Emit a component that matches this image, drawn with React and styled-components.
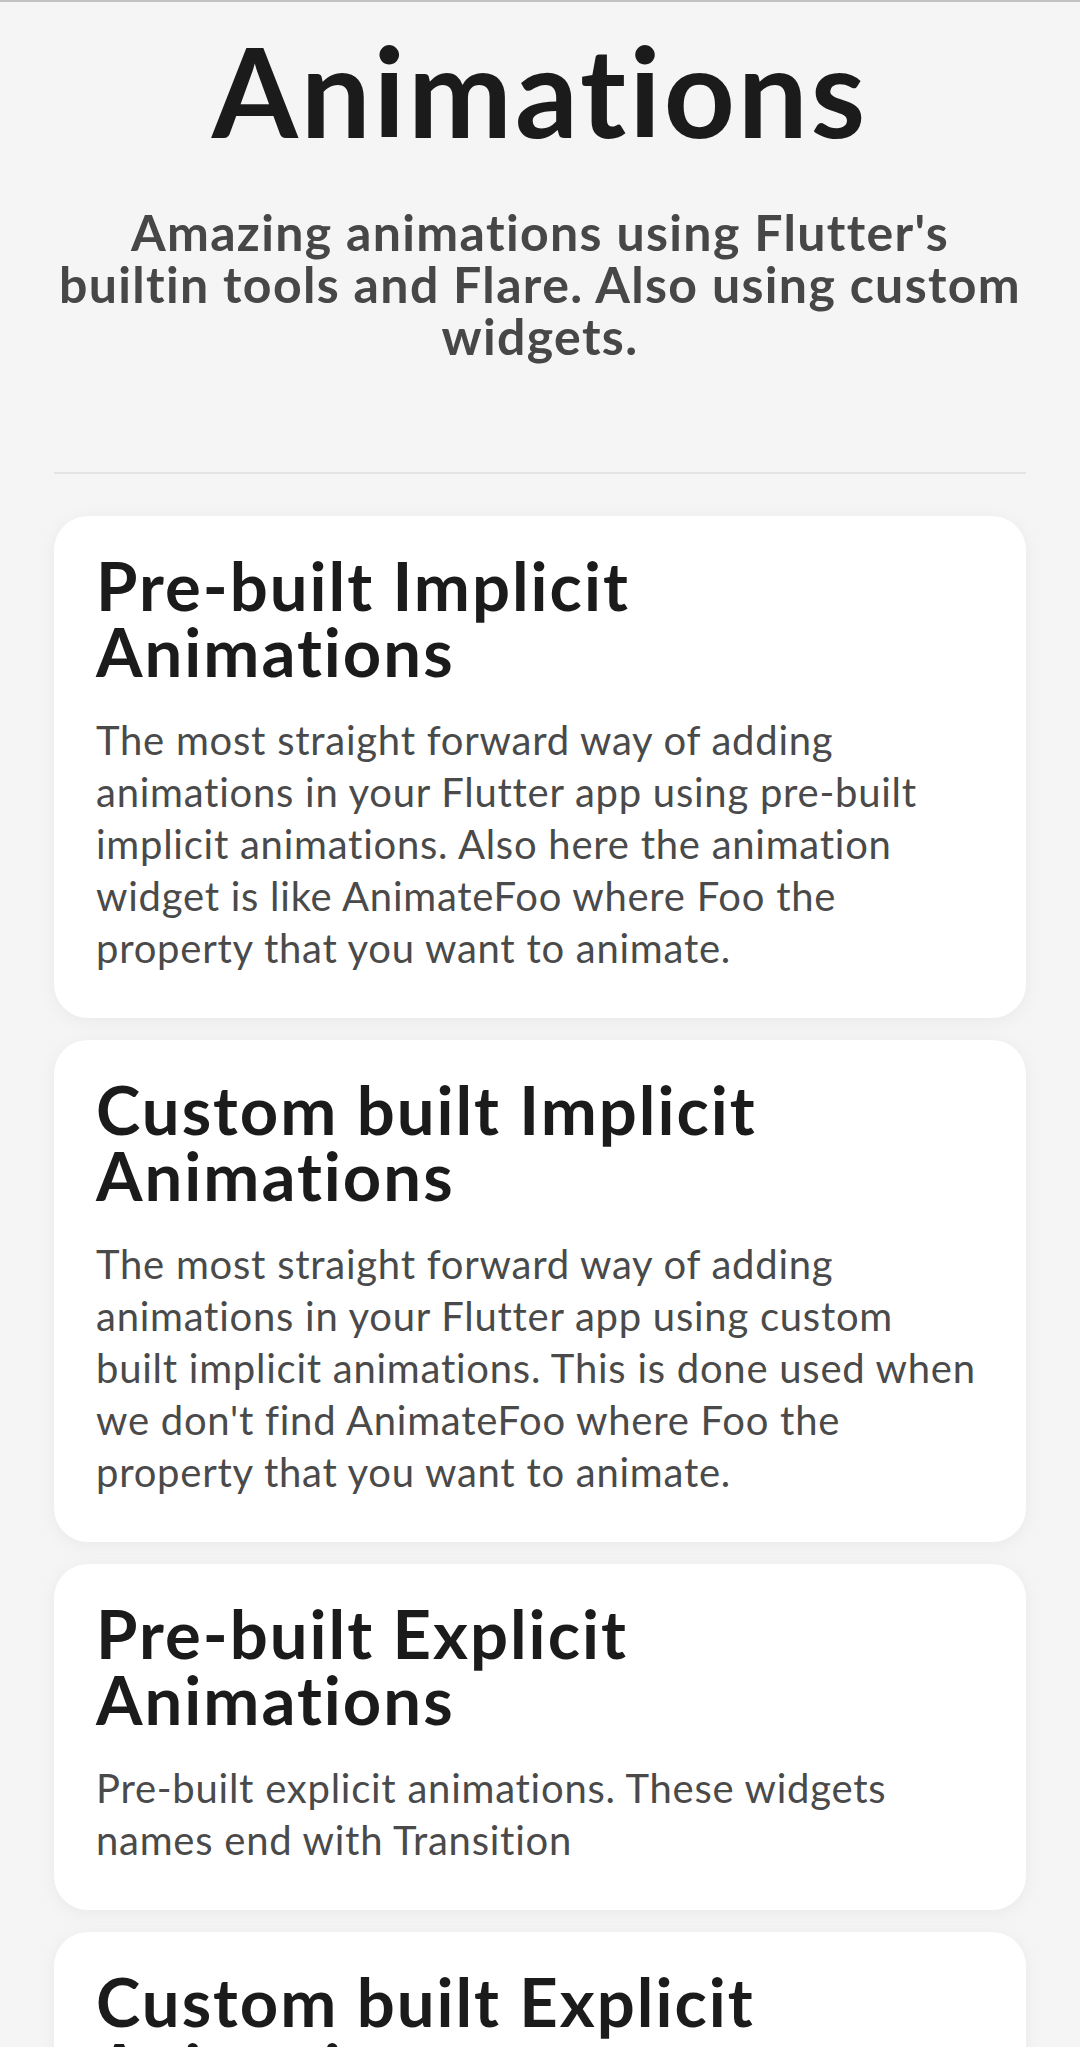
import React from "react";
import styled, { createGlobalStyle } from "styled-components";

// GLOBAL
const GlobalStyle = createGlobalStyle`
  html, body {
    margin: 0;
    padding: 0;
    background-color: #f5f5f5;
  }
  body {
    font-family: "Lato", "Liberation Sans", sans-serif;
    border-top: 2px solid #c2c2c2;
  }
  * {
    box-sizing: border-box;
  }
`;

// STYLED COMPONENT
const Page = styled.main`
  padding: 0 54px 40px;
  display: flex;
  flex-direction: column;
`;

const Header = styled.header`
  display: flex;
  flex-direction: column;
  align-items: center;
  text-align: center;
  padding-bottom: 110px;
  border-bottom: 2px solid #e4e4e4;
`;

const Title = styled.h1`
  margin: 13px 0 0;
  font-size: 124px;
  line-height: 150px;
  font-weight: 700;
  color: #1b1b1b;
  letter-spacing: 3px;
`;

const Subtitle = styled.p`
  margin: 41px 0 0;
  font-size: 50px;
  line-height: 52px;
  font-weight: 700;
  color: #474747;
  letter-spacing: 1.35px;
`;

const CardList = styled.section`
  display: flex;
  flex-direction: column;
  gap: 22px;
  padding-top: 42px;
`;

const Card = styled.article`
  background-color: #ffffff;
  border-radius: 34px;
  padding: 36px 42px 44px;
  box-shadow: 0 3px 20px rgba(0, 0, 0, 0.05);
  cursor: pointer;
`;

const CardTitle = styled.h2`
  margin: 0;
  font-size: 67px;
  line-height: 66px;
  font-weight: 700;
  color: #1b1b1b;
  letter-spacing: 2px;
`;

const CardText = styled.p`
  margin: 30px 0 0;
  font-size: 40px;
  line-height: 52px;
  font-weight: 400;
  color: #4a4a4a;
  letter-spacing: 0.75px;
`;

// MAIN COMPONENT
export default function App() {
  // VARIABLES
  const sections = [
    {
      id: 1,
      title: "Pre-built Implicit Animations",
      text: "The most straight forward way of adding animations in your Flutter app using pre-built implicit animations. Also here the animation widget is like AnimateFoo where Foo the property that you want to animate.",
    },
    {
      id: 2,
      title: "Custom built Implicit Animations",
      text: "The most straight forward way of adding animations in your Flutter app using custom built implicit animations. This is done used when we don't find AnimateFoo where Foo the property that you want to animate.",
    },
    {
      id: 3,
      title: "Pre-built Explicit Animations",
      text: "Pre-built explicit animations. These widgets names end with Transition",
    },
    {
      id: 4,
      title: "Custom built Explicit Animations",
      text: "Custom built explicit animations using AnimationController and AnimatedBuilder.",
    },
  ];

  // MAIN RETURN
  return (
    <>
      <GlobalStyle />
      <Page>
        <Header>
          <Title>Animations</Title>
          <Subtitle>
            Amazing animations using Flutter's builtin tools and Flare. Also
            using custom widgets.
          </Subtitle>
        </Header>
        <CardList>
          {sections.map((section) => (
            <Card key={section.id}>
              <CardTitle>{section.title}</CardTitle>
              <CardText>{section.text}</CardText>
            </Card>
          ))}
        </CardList>
      </Page>
    </>
  );
}
